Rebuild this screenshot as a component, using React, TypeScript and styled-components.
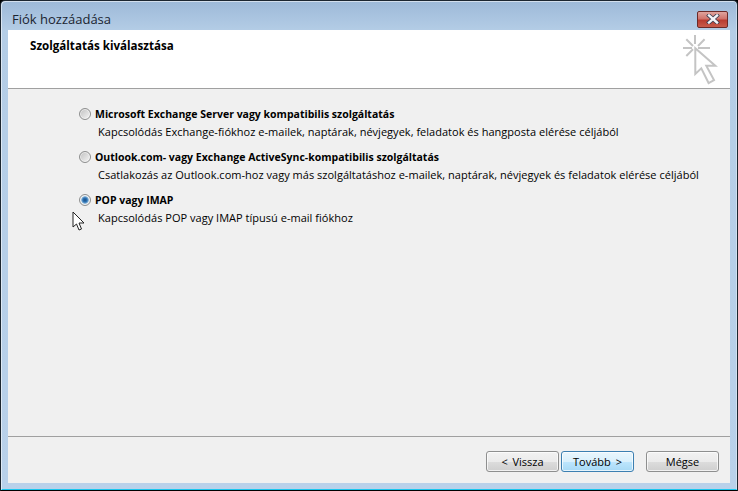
import React from 'react';
import styled, { createGlobalStyle } from 'styled-components';

const GlobalStyle = createGlobalStyle`
    html, body {
        margin: 0;
        padding: 0;
        background: #000;
    }
    body {
        font-family: "Open Sans", "Liberation Sans", sans-serif;
        font-size: 11px;
        color: #000;
    }
`

const Frame = styled.div`
    position: relative;
    width: 738px;
    height: 491px;
    box-sizing: border-box;
    overflow: hidden;
    display: flex;
    flex-direction: column;
    padding: 0 7px 7px 7px;
    background: linear-gradient(180deg, #9db9d8 0, #b4cde6 30px, #b9d1ea 100%);
    border: 1px solid #1c2630;
    border-bottom: 1px solid #000;
    border-radius: 5px 5px 0 0;
    box-shadow: inset 1px 1px 0 rgba(255,255,255,.55), inset -1px 0 0 rgba(255,255,255,.35), inset 0 -1px 0 #19c6ee;
`

const TitleBar = styled.div`
    height: 29px;
    flex: none;
    display: flex;
    align-items: center;
    justify-content: space-between;
    padding: 7px 2px 0 4px;
    box-sizing: border-box;
    font-size: 13px;
    color: #1a2430;
`

const CloseButton = styled.div`
    width: 31px;
    height: 17px;
    box-sizing: border-box;
    border: 1px solid #6b2a28;
    border-radius: 2px;
    background: linear-gradient(180deg, #dfa49e 0, #d0736b 45%, #b93c30 55%, #c85c4c 100%);
    display: flex;
    align-items: center;
    justify-content: center;
`

const Client = styled.div`
    flex: 1;
    min-height: 0;
    display: flex;
    flex-direction: column;
    background: #f0f0f0;
`

const Header = styled.div`
    height: 59px;
    flex: none;
    box-sizing: border-box;
    background: #fff;
    border-bottom: 1px solid #a0a0a0;
    display: flex;
    justify-content: space-between;
    padding: 8px 11px 0 22px;
`

const HeaderTitle = styled.h1`
    margin: 0;
    font-size: 11.6px;
    line-height: 15px;
    font-weight: 700;
    color: #000;
`

const WizardIcon = styled.svg`
    width: 36px;
    height: 50px;
    margin-top: -3px;
`

const Options = styled.div`
    flex: 1;
    display: flex;
    flex-direction: column;
    gap: 10px;
    padding: 17px 0 0 71px;
`

const Option = styled.div`
    display: flex;
    flex-direction: column;
    gap: 3px;
`

const OptionLabel = styled.div`
    display: flex;
    align-items: center;
    gap: 4px;
    height: 15px;
    font-size: 10.5px;
    font-weight: 700;
    white-space: nowrap;
`

const OptionText = styled.div`
    margin-left: 19px;
    height: 15px;
    line-height: 15px;
    letter-spacing: .02px;
    white-space: nowrap;
`

const Radio = styled.span<{ $checked?: boolean }>`
    width: 12px;
    height: 12px;
    box-sizing: border-box;
    flex: none;
    border-radius: 50%;
    border: 1px solid #8e8f8f;
    background: ${p => p.$checked
        ? 'radial-gradient(circle, #1b4f86 0, #2f74b5 30%, #7fb0d8 48%, #e4e8ec 58%, #dcdcdc 100%)'
        : 'linear-gradient(135deg, #c0c0c0, #f6f6f6)'};
    box-shadow: inset 0 0 0 1px rgba(255,255,255,.6);
`

const Footer = styled.div`
    flex: none;
    height: 47px;
    box-sizing: border-box;
    border-top: 1px solid #a0a0a0;
    display: flex;
    justify-content: flex-end;
    padding: 14px 11px 0 0;
`

const Button = styled.button<{ $primary?: boolean; $gap?: number }>`
    width: 73px;
    height: 21px;
    margin-left: ${p => p.$gap ?? 0}px;
    padding: 0;
    box-sizing: border-box;
    font: inherit;
    word-spacing: 2px;
    color: #000;
    border-radius: 3px;
    border: 1px solid ${p => p.$primary ? '#3c7fb1' : '#8e8f8f'};
    background: ${p => p.$primary
        ? 'linear-gradient(180deg, #eaf6fd 0, #d9f0fc 50%, #bee6fd 50%, #a7d9f5 100%)'
        : 'linear-gradient(180deg, #f2f2f2 0, #ebebeb 50%, #dddddd 50%, #cfcfcf 100%)'};
    box-shadow: inset 0 0 0 1px rgba(255,255,255,.7);
`

const Pointer = styled.svg`
    position: absolute;
    left: 71px;
    top: 210px;
    width: 13px;
    height: 20px;
`

const App: React.FC = () => {
    return (
        <Frame>
            <GlobalStyle />
            <TitleBar>
                <span>Fiók hozzáadása</span>
                <CloseButton>
                    <svg width="14" height="10" viewBox="0 0 14 10">
                        <path d="M3 1.5 L11 8.5 M11 1.5 L3 8.5" stroke="#3b3f52" strokeWidth="4" strokeLinecap="square" />
                        <path d="M3 1.5 L11 8.5 M11 1.5 L3 8.5" stroke="#f4f4f8" strokeWidth="2.4" strokeLinecap="square" />
                    </svg>
                </CloseButton>
            </TitleBar>
            <Client>
                <Header>
                    <HeaderTitle>Szolgáltatás kiválasztása</HeaderTitle>
                    <WizardIcon viewBox="0 0 36 50">
                        <g stroke="#c4c4c4" strokeWidth="2" fill="none">
                            <path d="M12 0 V9 M0 13 H9 M15 13 H27 M3.3 4.3 L10 11 M21.6 4.3 L15 11 M3.3 21 L10 14.3" />
                            <path d="M12.3 13.3 V39 L18.3 33.3 L25.6 48 L31 45 L23.3 30.7 H32.3 Z" fill="#fff" />
                        </g>
                    </WizardIcon>
                </Header>
                <Options>
                    <Option>
                        <OptionLabel><Radio />Microsoft Exchange Server vagy kompatibilis szolgáltatás</OptionLabel>
                        <OptionText>Kapcsolódás Exchange-fiókhoz e-mailek, naptárak, névjegyek, feladatok és hangposta elérése céljából</OptionText>
                    </Option>
                    <Option>
                        <OptionLabel><Radio />Outlook.com- vagy Exchange ActiveSync-kompatibilis szolgáltatás</OptionLabel>
                        <OptionText>Csatlakozás az Outlook.com-hoz vagy más szolgáltatáshoz e-mailek, naptárak, névjegyek és feladatok elérése céljából</OptionText>
                    </Option>
                    <Option>
                        <OptionLabel><Radio $checked />POP vagy IMAP</OptionLabel>
                        <OptionText>Kapcsolódás POP vagy IMAP típusú e-mail fiókhoz</OptionText>
                    </Option>
                </Options>
                <Footer>
                    <Button>&lt; Vissza</Button>
                    <Button $primary $gap={2}>Tovább &gt;</Button>
                    <Button $gap={12}>Mégse</Button>
                </Footer>
            </Client>
            <Pointer viewBox="0 0 13 20">
                <path d="M1 1 L1 16 L4.5 13 L7 19 L9.5 18 L7 12 L12 12 Z" fill="#fff" stroke="#222" strokeWidth="1" />
            </Pointer>
        </Frame>
    )
}

export default App
